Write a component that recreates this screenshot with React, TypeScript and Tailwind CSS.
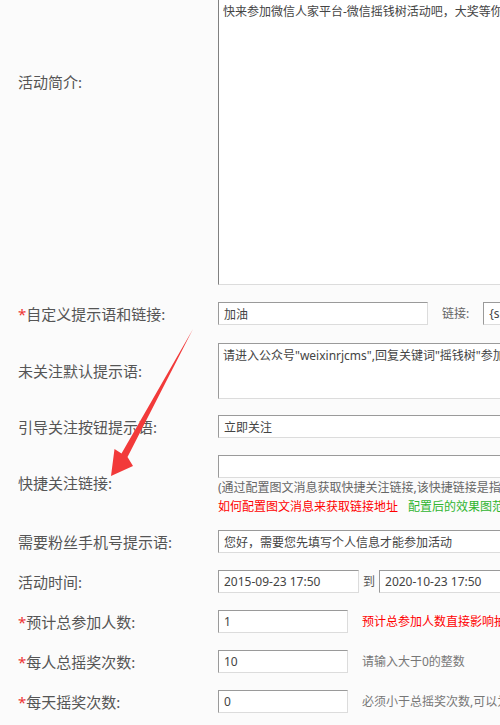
import React from "react";

const inputCls =
  "h-[23px] shrink-0 border border-t-[#9a9a9a] border-l-[#9a9a9a] border-r-[#dcdcdc] border-b-[#dcdcdc] bg-white px-[5px] text-[12px] text-[#444] outline-none";

function Label({ text, req }: { text: string; req?: boolean }) {
  return (
    <div className="w-[218px] shrink-0 whitespace-nowrap pl-[18px] text-[15px] leading-[20px] text-[#555]">
      {req && <span className="text-[#e33]">*</span>}
      {text}
    </div>
  );
}

export default function App() {
  return (
    <div className="relative h-[725px] w-[500px] overflow-hidden bg-[#fbfbfb] font-['Noto_Sans','Noto_Sans_CJK_SC',sans-serif]">
      <div className="-mt-[1px] flex flex-col">
        {/* Row 1 */}
        <div className="flex">
          <div className="pt-[73px]">
            <Label text="活动简介:" />
          </div>
          <textarea
            readOnly
            className="h-[286px] w-[420px] shrink-0 resize-none overflow-hidden border border-t-[#9a9a9a] border-l-[#808080] border-r-[#dcdcdc] border-b-[#dcdcdc] bg-white px-[4px] pt-[3px] text-[12px] leading-[18px] text-[#444] outline-none whitespace-nowrap"
            defaultValue="快来参加微信人家平台-微信摇钱树活动吧，大奖等你来拿！"
          />
        </div>

        {/* Row 2 */}
        <div className="mt-[17px] flex items-center">
          <Label text="自定义提示语和链接:" req />
          <input readOnly className={`${inputCls} w-[210px]`} defaultValue="加油" />
          <span className="ml-[14px] whitespace-nowrap text-[12px] text-[#666]">链接:</span>
          <input readOnly className={`${inputCls} ml-[14px] w-[200px]`} defaultValue="{siteurl}" />
        </div>

        {/* Row 3 */}
        <div className="mt-[18px] flex items-center">
          <Label text="未关注默认提示语:" />
          <textarea
            readOnly
            className="h-[56px] w-[420px] shrink-0 resize-none overflow-hidden border border-t-[#9a9a9a] border-l-[#9a9a9a] border-r-[#dcdcdc] border-b-[#dcdcdc] bg-white px-[4px] pt-[3px] text-[12px] leading-[18px] text-[#444] outline-none whitespace-nowrap"
            defaultValue={'请进入公众号"weixinrjcms",回复关键词"摇钱树"参加活动'}
          />
        </div>

        {/* Row 4 */}
        <div className="mt-[16px] flex items-center">
          <Label text="引导关注按钮提示语:" />
          <input readOnly className={`${inputCls} w-[420px]`} defaultValue="立即关注" />
        </div>

        {/* Row 5 */}
        <div className="mt-[17px] flex items-center">
          <div className="pb-[6px]">
            <Label text="快捷关注链接:" />
          </div>
          <div className="flex flex-col">
            <input readOnly className={`${inputCls} w-[420px]`} defaultValue="" />
            <div className="whitespace-nowrap text-[12px] leading-[19px] text-[#666]">
              (通过配置图文消息获取快捷关注链接,该快捷链接是指用户点击后直接进入关注页面)
            </div>
            <div className="flex whitespace-nowrap text-[12px] leading-[19px]">
              <span className="text-[#f00]">如何配置图文消息来获取链接地址</span>
              <span className="ml-[10px] text-[#2fb52f]">配置后的效果图范例</span>
            </div>
          </div>
        </div>

        {/* Row 6 */}
        <div className="mt-[14px] flex items-center">
          <Label text="需要粉丝手机号提示语:" />
          <input
            readOnly
            className={`${inputCls} w-[420px]`}
            defaultValue="您好，需要您先填写个人信息才能参加活动"
          />
        </div>

        {/* Row 7 */}
        <div className="mt-[17px] flex items-center">
          <Label text="活动时间:" />
          <input readOnly className={`${inputCls} w-[141px]`} defaultValue="2015-09-23 17:50" />
          <span className="ml-[4px] whitespace-nowrap text-[12px] text-[#555]">到</span>
          <input readOnly className={`${inputCls} ml-[4px] w-[141px]`} defaultValue="2020-10-23 17:50" />
        </div>

        {/* Row 8 */}
        <div className="mt-[17px] flex items-center">
          <Label text="预计总参加人数:" req />
          <input readOnly className={`${inputCls} w-[130px]`} defaultValue="1" />
          <span className="ml-[14px] whitespace-nowrap text-[12px] text-[#f00]">
            预计总参加人数直接影响抽奖概率
          </span>
        </div>

        {/* Row 9 */}
        <div className="mt-[17px] flex items-center">
          <Label text="每人总摇奖次数:" req />
          <input readOnly className={`${inputCls} w-[130px]`} defaultValue="10" />
          <span className="ml-[14px] whitespace-nowrap text-[12px] text-[#777]">请输入大于0的整数</span>
        </div>

        {/* Row 10 */}
        <div className="mt-[17px] flex items-center">
          <Label text="每天摇奖次数:" req />
          <input readOnly className={`${inputCls} w-[130px]`} defaultValue="0" />
          <span className="ml-[14px] whitespace-nowrap text-[12px] text-[#777]">
            必须小于总摇奖次数,可以为0
          </span>
        </div>
      </div>

      {/* red annotation arrow */}
      <svg
        className="pointer-events-none absolute left-0 top-0"
        width="500"
        height="725"
        viewBox="0 0 500 725"
      >
        <polygon
          points="193,329 127.5,457 133,466 111,476 114.5,449 121.5,453.5"
          fill="#f23a3a"
        />
      </svg>
    </div>
  );
}
